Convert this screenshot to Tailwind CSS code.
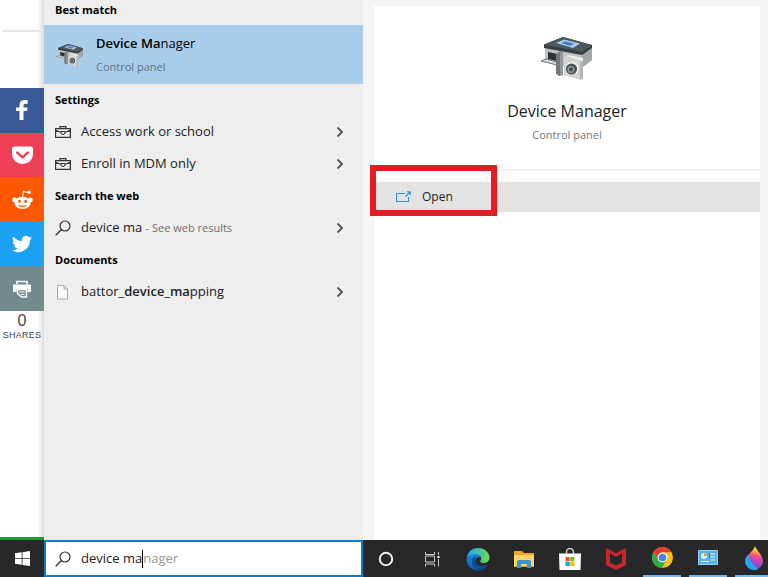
<!DOCTYPE html>
<html lang="en">
<head>
  <meta charset="UTF-8" />
  <meta name="viewport" content="width=device-width, initial-scale=1.0" />
  <script src="https://cdn.jsdelivr.net/npm/@tailwindcss/browser@4"></script>
  <title>Windows Search</title>
</head>
<body class="bg-white font-['Open_Sans','Noto_Sans',sans-serif] text-[13px] text-[#222]">

  <!-- Shared icons -->
  <svg class="hidden">
    <symbol id="chevron" viewBox="0 0 8 12">
      <path d="M1.500 1.500 6 6l-4.500 4.500" fill="none" stroke="#555" stroke-width="1.900" />
    </symbol>
    <symbol id="briefcase" viewBox="0 0 16 13">
      <path d="M.6 2.600h14.800v8.800H.6zM5 2.600V.6h6v2M.6 4.200l5.900 2.300M15.400 4.200 9.500 6.500" fill="none" stroke="#333" stroke-width="1.200" />
      <path d="M6 5.500h4V7a2 1.500 0 0 1-4 0z" fill="#eee" stroke="#333" />
    </symbol>
    <symbol id="search" viewBox="0 0 16 16">
      <circle cx="10" cy="6" r="5" fill="none" stroke="#333" stroke-width="1.200" />
      <path d="M6.500 9.500.7 15.300" stroke="#333" stroke-width="1.400" />
    </symbol>
    <symbol id="device" viewBox="0 0 54 44">
      <path d="M5 11 42 18v16L5 26z" fill="#bfc2c3" />
      <path d="m42 18 10-7v13l-10 8z" fill="#a3a7a8" />
      <path d="M4 8.500 23 1l29 8v3l-10 7L4 12z" fill="#343f44" />
      <path d="M4 8.500 23 1l29 8-10 7z" fill="#4c585e" />
      <path d="m16 7 8-3.500L40 7.500 33 12z" fill="#a9cdea" />
      <path d="m21 7 4-1.800 9 2.300-4 2.500z" fill="#3f83c4" />
      <path d="m8 16 9 2v7l-9-2z" fill="#2b3033" />
      <path d="m1 25 5-2 11 3v3z" fill="#dcdcdc" stroke="#70767a" />
      <path d="m16 18 4-3 3 1v23l-4 1-3-2z" fill="#747a7e" />
      <path d="m20 16 3 .5v22L20 39z" fill="#93999c" />
      <path d="m24 22 2-2 16 4 1 2v17l-4 .5L24 39z" fill="#d3d4d2" />
      <path d="m26 20 3-1 14 3v3z" fill="#efefed" />
      <path d="M40 25h3v18l-3 .5z" fill="#b4b6b5" />
      <circle cx="32" cy="32.500" r="6.800" fill="#f0f0ee" />
      <circle cx="31.500" cy="33" r="5.600" fill="#4a5154" />
      <circle cx="31" cy="33.500" r="3.600" fill="#8d999d" />
      <circle cx="31" cy="33.500" r="2" fill="#3d474c" />
    </symbol>
  </svg>

  <div class="flex min-h-screen flex-col">
    <div class="flex flex-1">

      <!-- Share bar of the page behind -->
      <aside class="flex w-11 shrink-0 flex-col border-b-3 border-[#22992f] bg-linear-to-r from-white from-85% to-[#dcdcdc]">
        <div class="ml-0.5 h-8 border-b-2 border-[#e4e4e4]"></div>
        <div class="mt-14 grid h-[223px] grid-rows-5">
          <button aria-label="Facebook" class="flex items-center justify-center bg-[#3b5998]">
            <svg class="h-5 w-3" viewBox="0 0 12 20"><path d="M3.500 20v-9H0V7.500h3.500V5C3.500 1.700 5.500 0 8.500 0c1.500 0 2.800.1 3.200.2v3.500H9.500C7.800 3.700 7.500 4.500 7.500 5.600v1.900h4L11 11H7.500v9z" fill="#fff" /></svg>
          </button>
          <button aria-label="Pocket" class="flex items-center justify-center bg-[#ee4056]">
            <svg class="h-5 w-[21px]" viewBox="0 0 22 20"><path d="M2.500 1h17C21 1 22 2 22 3.300V9a11 10.500 0 0 1-22 0V3.300C0 2 1 1 2.500 1z" fill="#fff" /><path d="m5.500 7.500 5.500 5 5.500-5" fill="none" stroke="#ee4056" stroke-width="2.600" stroke-linecap="round" stroke-linejoin="round" /></svg>
          </button>
          <button aria-label="Reddit" class="flex items-center justify-center bg-[#ff5700]">
            <svg class="h-[21px] w-[21px]" viewBox="0 0 22 21"><ellipse cx="11" cy="14" rx="8.500" ry="6.500" fill="#fff" /><circle cx="2.700" cy="11" r="2.500" fill="#fff" /><circle cx="19.300" cy="11" r="2.500" fill="#fff" /><path d="m11 8 1-6 5 1.200" fill="none" stroke="#fff" stroke-width="1.200" /><circle cx="18" cy="3" r="1.800" fill="#fff" /><circle cx="7.800" cy="12.500" r="1.500" fill="#ff5700" /><circle cx="14.200" cy="12.500" r="1.500" fill="#ff5700" /><path d="M7 16.500q4 2.500 8 0" fill="none" stroke="#ff5700" stroke-width="1.200" /></svg>
          </button>
          <button aria-label="Twitter" class="flex items-center justify-center bg-[#1da1f2]">
            <svg class="h-5 w-5" viewBox="0 0 24 24"><path d="M24 4.600a10 10 0 0 1-2.800.8 5 5 0 0 0 2.200-2.700 10 10 0 0 1-3.100 1.200 4.900 4.900 0 0 0-8.400 4.500A14 14 0 0 1 1.700 3.200a4.900 4.900 0 0 0 1.500 6.500 5 5 0 0 1-2.200-.6 4.900 4.900 0 0 0 3.900 4.900 5 5 0 0 1-2.200.1 4.900 4.900 0 0 0 4.600 3.400A10 10 0 0 1 0 19.500 14 14 0 0 0 21.500 7.100 10 10 0 0 0 24 4.600z" fill="#fff" /></svg>
          </button>
          <button aria-label="Print" class="flex items-center justify-center bg-[#738a8d]">
            <svg class="h-[18px] w-[18px]" viewBox="0 0 18 18"><path d="M4 4V1.500h10V4" fill="none" stroke="#fff" stroke-width="1.600" /><path d="M1 4.500h16q1 0 1 1V12h-3.500V9h-11v3H0V5.500q0-1 1-1z" fill="#fff" /><path d="M4.500 9.500h9V17H8.500l-4-3.500z" fill="#738a8d" stroke="#fff" stroke-width="1.400" /><path d="M6.500 12h5M8 14.500h3.500" stroke="#fff" /></svg>
          </button>
        </div>
        <div class="text-center font-['Liberation_Sans',sans-serif] text-[#444]">
          <div class="text-base leading-5">0</div>
          <div class="text-[9px] leading-2 tracking-wide">SHARES</div>
        </div>
      </aside>

      <!-- Result list -->
      <section class="w-[319px] shrink-0 bg-[#eee]">
        <h2 class="flex h-[25px] items-center px-[11px] pb-1 text-[11px] font-bold text-black">Best match</h2>
        <button class="flex h-[59px] w-full items-center bg-[#a9cce9] px-3 text-left">
          <svg class="mr-3 h-[26px] w-7"><use href="#device" /></svg>
          <span>
            <span class="block text-[13px] leading-5 text-black"><span class="font-semibold">Device Ma</span>nager</span>
            <span class="block pt-1 text-[11px] leading-5 text-[#5c7080]">Control panel</span>
          </span>
        </button>

        <h2 class="flex h-8 items-center px-[11px] text-[11px] font-bold text-black">Settings</h2>
        <button class="flex h-8 w-full items-center pr-[19px] pl-[11px] text-left">
          <svg class="mr-2.5 h-[13px] w-4"><use href="#briefcase" /></svg>
          <span class="flex-1">Access work or school</span>
          <svg class="h-3 w-2"><use href="#chevron" /></svg>
        </button>
        <button class="flex h-8 w-full items-center pr-[19px] pl-[11px] text-left">
          <svg class="mr-2.5 h-[13px] w-4"><use href="#briefcase" /></svg>
          <span class="flex-1">Enroll in MDM only</span>
          <svg class="h-3 w-2"><use href="#chevron" /></svg>
        </button>

        <h2 class="flex h-8 items-center px-[11px] text-[11px] font-bold text-black">Search the web</h2>
        <button class="flex h-8 w-full items-center pr-[19px] pl-[11px] text-left">
          <svg class="mr-2.5 h-4 w-4"><use href="#search" /></svg>
          <span class="flex-1">device ma <span class="text-[11px] text-[#707070]">- See web results</span></span>
          <svg class="h-3 w-2"><use href="#chevron" /></svg>
        </button>

        <h2 class="flex h-8 items-center px-[11px] text-[11px] font-bold text-black">Documents</h2>
        <button class="flex h-8 w-full items-center pr-[19px] pl-[11px] text-left">
          <svg class="mr-2.5 h-4 w-4" viewBox="0 0 16 16"><path d="M2.500 1.500H9l3.500 3.500v10h-10zM9 1.500V5h3.500" fill="#fafafa" stroke="#aaa" /></svg>
          <span class="flex-1">battor_<span class="font-semibold">device_ma</span>pping</span>
          <svg class="h-3 w-2"><use href="#chevron" /></svg>
        </button>
      </section>

      <!-- Details pane -->
      <section class="flex min-w-0 flex-1 bg-[#f4f4f4] pt-1.5 pr-2 pl-[11px]">
        <div class="flex-1 bg-white">
          <div class="flex h-[165px] flex-col items-center border-b-2 border-[#f2f2f2] pt-[30px]">
            <svg class="h-11 w-[54px]"><use href="#device" /></svg>
            <h1 class="mt-[19px] text-base leading-6">Device Manager</h1>
            <p class="text-[11px] leading-6 text-[#777]">Control panel</p>
          </div>
          <div class="relative mt-[11px]">
            <button class="flex h-[30px] w-full items-center bg-[#e3e3e3] pl-[22px] text-left">
              <svg class="mr-[11px] h-3 w-[15px]" viewBox="0 0 15 12"><path d="M9 2.500H.5v8h12V6M9.500 5.500l4-4M11 .8h3.200V4" fill="none" stroke="#3f8fd0" stroke-width="1.200" /></svg>
              <span class="text-xs">Open</span>
            </button>
            <div class="pointer-events-none absolute -top-[17px] -left-1 h-[51px] w-[127px] border-6 border-[#e51c23]"></div>
          </div>
        </div>
      </section>
    </div>

    <!-- Taskbar -->
    <footer class="flex h-[37px] overflow-hidden bg-[#28282a]">
      <button aria-label="Start" class="flex w-11 shrink-0 items-center justify-center">
        <svg class="h-[15px] w-[15px]" viewBox="0 0 16 16"><path d="M0 2.300 7.200 1.300v6.300H0zM8 1.200 16 0v7.600H8zM0 8.400h7.200v6.300l-7.200-1zM8 8.400h8V16l-8-1.200z" fill="#fff" /></svg>
      </button>
      <label class="flex w-[319px] shrink-0 items-center border-2 border-[#1279c5] bg-white pl-[9px]">
        <svg class="mr-2.5 h-4 w-4"><use href="#search" /></svg>
        <input type="text" value="device ma" aria-label="Search" class="field-sizing-content outline-none" />
        <span class="h-[18px] w-px bg-black"></span>
        <span class="text-[#999]">nager</span>
      </label>
      <button aria-label="Cortana" class="flex w-[46px] shrink-0 items-center justify-center">
        <svg class="h-4 w-4" viewBox="0 0 16 16"><circle cx="8" cy="8" r="6.200" fill="none" stroke="#f2f2f2" stroke-width="2" /></svg>
      </button>
      <button aria-label="Task view" class="flex w-[46px] shrink-0 items-center justify-center">
        <svg class="h-4 w-4" viewBox="0 0 16 16"><path d="M1.500 1v2.500h9V1M1.500 5h9v6h-9zM1.500 15.500V13h9v2.500M14.500 1v3M14.500 8v7.500" fill="none" stroke="#ccc" /><path d="M13.500 5h2v2h-2z" fill="#fff" /></svg>
      </button>
      <button aria-label="Edge" class="flex w-[46px] shrink-0 items-center justify-center">
        <svg class="h-6 w-6" viewBox="0 0 24 24">
          <defs>
            <linearGradient id="edgeTop"><stop offset=".2" stop-color="#2aaee0" /><stop offset="1" stop-color="#6ddc4b" /></linearGradient>
            <linearGradient id="edgeLow" x2="0" y2="1"><stop stop-color="#1a8be0" /><stop offset="1" stop-color="#0d56b0" /></linearGradient>
          </defs>
          <path d="M1 11C1.500 5 6 1 12 1c7 0 11.500 5 11.500 9.500 0 4-3 5.500-6 5.500-2.500 0-4-1-3-2.500 2-3-.5-6-4.500-6-4 0-7 1.500-9 3.500z" fill="url(#edgeTop)" />
          <path d="M.7 12C1.500 9 5 7 9 7c3 0 5 1.500 5.500 3.500C11 9 8.500 12 9.500 15c1 3.500 6 5.500 12 3-2 3.500-5.500 5.500-9.500 5.500C5.500 23.500.5 18.500.7 12z" fill="url(#edgeLow)" />
          <path d="M6 14c0-3 2-5 5-5.500-3 2-2.500 5.500-1 7.500 2.500 3.500 7.500 4 11.500 2-2 3.500-5 5-8 5-4.500 0-7.500-4.500-7.500-9z" fill="#0c4a9a" />
        </svg>
      </button>
      <button aria-label="File Explorer" class="flex w-[46px] shrink-0 items-center justify-center">
        <svg class="h-[18px] w-5" viewBox="0 0 20 18"><path d="M0 1h8l2 2h10v14H0z" fill="#e9a825" /><path d="M0 5h20v11H0z" fill="#fbd467" /><path d="M3 18v-6q0-2 2-2h10q2 0 2 2v6h-4v-4H7v4z" fill="#3c91cf" /></svg>
      </button>
      <button aria-label="Microsoft Store" class="flex w-[46px] shrink-0 items-center justify-center">
        <svg class="h-[22px] w-[22px]" viewBox="0 0 22 22"><path d="M7.500 6V4a3.500 3.500 0 0 1 7 0v2" fill="none" stroke="#ccc" stroke-width="1.500" /><path d="M0 5.500h22L21.500 22H.5z" fill="#fff" /><path d="M6.500 9h4.200v4.200H6.500z" fill="#f25022" /><path d="M11.300 9h4.200v4.200h-4.200z" fill="#7fba00" /><path d="M6.500 13.800h4.200V18H6.500z" fill="#00a4ef" /><path d="M11.300 13.800h4.200V18h-4.200z" fill="#ffb900" /></svg>
      </button>
      <button aria-label="McAfee" class="flex w-[46px] shrink-0 items-center justify-center">
        <svg class="h-[22px] w-5" viewBox="0 0 20 22"><path d="m0 0 10 5L20 0v17l-10 5-10-5zM4 5.500v9l6 3 6-3v-9l-6 3.500z" fill="#c2272d" /></svg>
      </button>
      <button aria-label="Chrome" class="flex w-[46px] shrink-0 flex-col items-center">
        <svg class="my-auto h-[21px] w-[21px]" viewBox="0 0 22 22"><circle cx="11" cy="11" r="11" fill="#fbc116" /><path d="M1.500 5.500A11 11 0 0 1 20.500 5.500H11v6l-4.500 2z" fill="#e33b2e" /><path d="M1.500 5.500 6.500 14l8.500-.5L10.500 22A11 11 0 0 1 1.500 5.500z" fill="#2da94f" /><circle cx="11" cy="11" r="5.200" fill="#fff" /><circle cx="11" cy="11" r="4" fill="#4285f4" /></svg>
        <span class="h-0.5 w-[38px] bg-[#76b9ed]"></span>
      </button>
      <button aria-label="Control Panel" class="flex w-[46px] shrink-0 flex-col items-center">
        <svg class="my-auto h-[15px] w-5" viewBox="0 0 20 15"><path d="M0 0h20v15H0z" fill="#8dd3f5" /><path d="M1 1h18v13H1z" fill="#58b5e5" /><circle cx="6" cy="6" r="3" fill="#d8f0fb" /><path d="M6 6V3a3 3 0 0 1 3 3z" fill="#e6a23c" /><path d="M11 4h6M11 7h6M13 10h4M3 11.500h8" stroke="#e6f6fd" stroke-width="1.200" /><path d="M11.500 3v5" stroke="#24709e" /></svg>
        <span class="h-0.5 w-[38px] bg-[#76b9ed]"></span>
      </button>
      <button aria-label="Paint 3D" class="flex w-[46px] shrink-0 flex-col items-center">
        <svg class="my-auto h-6 w-[18px]" viewBox="0 0 18 24">
          <defs>
            <linearGradient id="drop" x1=".6" y1="0" x2=".4" y2="1"><stop offset=".15" stop-color="#ffd028" /><stop offset=".4" stop-color="#f0508c" /><stop offset=".65" stop-color="#b045c8" /><stop offset=".9" stop-color="#5a55d8" /></linearGradient>
          </defs>
          <path d="M10 0c1 4 8 9 8 15a9 9 0 0 1-18 0C0 10 8 6 10 0z" fill="url(#drop)" />
          <path d="M0 15c0-3 2-5 3.500-6.500C4 14 7 17 13 23A9 9 0 0 1 0 15z" fill="#27a2ec" />
        </svg>
        <span class="h-0.5 w-[38px] bg-[#76b9ed]"></span>
      </button>
    </footer>
  </div>

</body>
</html>
